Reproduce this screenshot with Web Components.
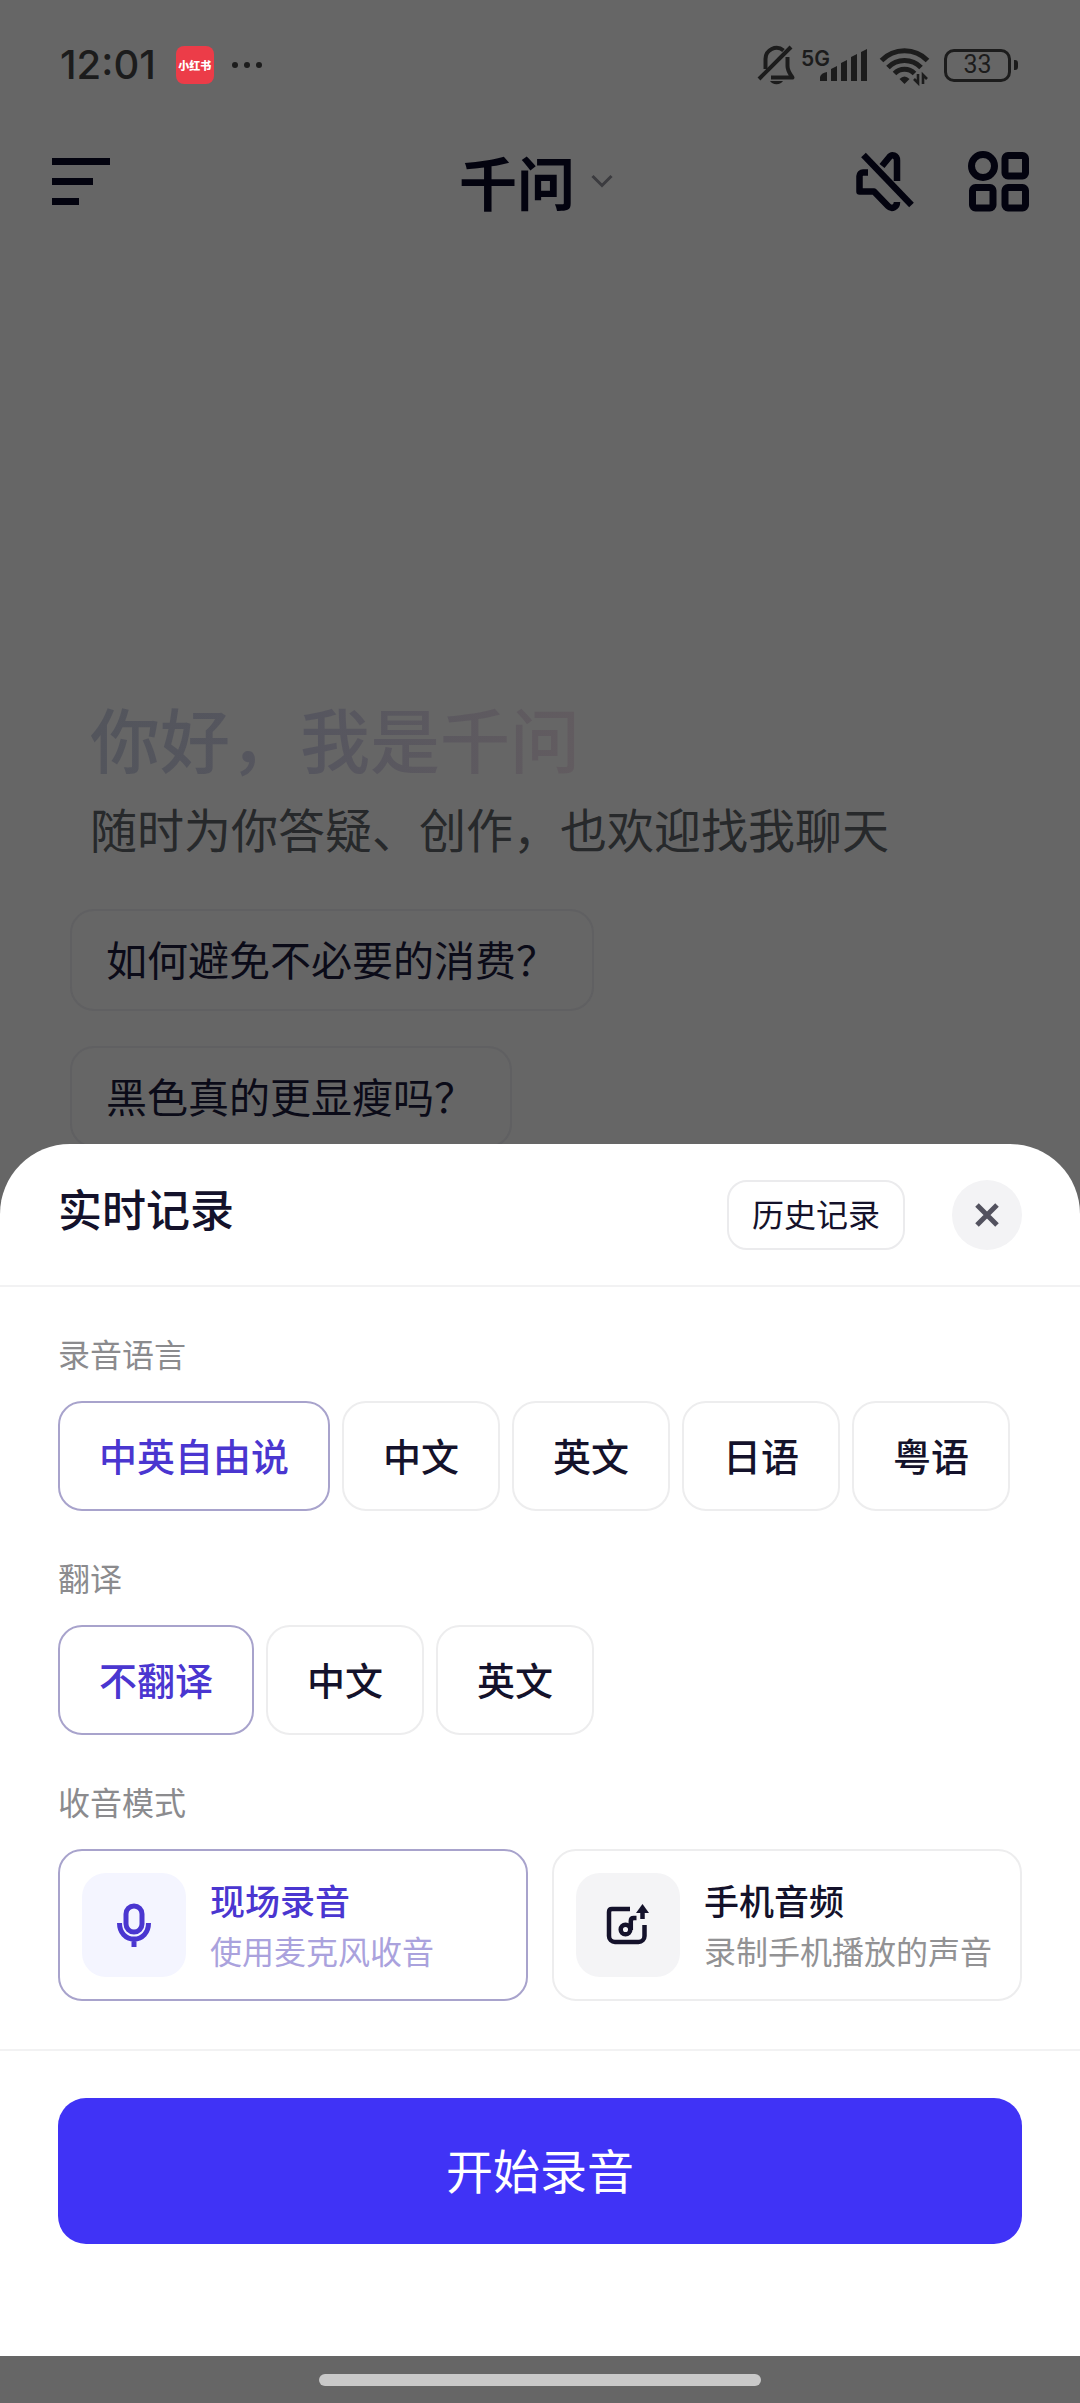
<!DOCTYPE html>
<html lang="zh-CN">
<head>
<meta charset="utf-8">
<meta name="viewport" content="width=device-width, initial-scale=1">
<title>千问</title>
<style>
  body {
    margin: 0;
    font-family: "Noto Sans CJK SC", sans-serif;
    color: #14122b;
    background: #666;
  }
</style>
</head>
<body>
<qw-app>
  <qw-home>
    <qw-suggestion>如何避免不必要的消费？</qw-suggestion>
    <qw-suggestion>黑色真的更显瘦吗？</qw-suggestion>
  </qw-home>
  <qw-sheet slot="sheet">
    <span slot="title">实时记录</span>
    <qw-chips label="录音语言" name="language" options="中英自由说,中文,英文,日语,粤语"></qw-chips>
    <qw-chips label="翻译" name="translate" options="不翻译,中文,英文"></qw-chips>
    <qw-modes label="收音模式"></qw-modes>
    <span slot="action">开始录音</span>
  </qw-sheet>
</qw-app>

<script>
const define = (name, markup, init) => {
  const template = document.createElement('template')
  template.innerHTML = `<style>* { box-sizing: border-box; }</style>${markup}`

  customElements.define(name, class extends HTMLElement {
    constructor() {
      super()
      this.attachShadow({ mode: 'open' })
      this.shadowRoot.appendChild(template.content.cloneNode(true))
    }

    connectedCallback() {
      init && init(this, this.shadowRoot)
    }
  })
}

define('qw-status', `
<style>
  :host {
    display: flex;
    align-items: center;
    justify-content: space-between;
    height: 130px;
    padding: 0 62px 0 60px;
    font-family: Inter, sans-serif;
    color: #1c1c1c;
  }
  div { display: flex; align-items: center; }
  svg { display: block; fill: none; stroke: currentColor; }
  time { font-size: 40px; font-weight: 500; line-height: 48px; }
  .app {
    justify-content: center;
    width: 38px;
    height: 38px;
    margin: 0 17px 0 20px;
    border-radius: 8px;
    background: #ec3c48;
    color: #fff;
    font: 900 11px/16px "Noto Sans CJK SC", sans-serif;
  }
  .network { align-items: flex-start; margin: 0 11px 0 4px; }
  .network span { font-size: 21px; font-weight: 600; line-height: 22px; }
  .network svg { margin-left: -10px; fill: currentColor; stroke: none; }
  .battery {
    justify-content: center;
    width: 67px;
    height: 33px;
    margin-left: 13px;
    border: 3px solid;
    border-radius: 10px;
    font-family: Roboto, sans-serif;
    font-size: 25px;
    line-height: 26px;
  }
  .nub { width: 4px; height: 10px; margin-left: 3px; border-radius: 0 3px 3px 0; background: currentColor; }
</style>
<div>
  <time>12:01</time>
  <div class="app">小红书</div>
  <svg width="32" height="8" viewBox="0 0 32 8" style="fill: currentColor; stroke: none">
    <circle cx="4" cy="4" r="3"/><circle cx="16" cy="4" r="3"/><circle cx="28" cy="4" r="3"/>
  </svg>
</div>
<div>
  <svg width="40" height="44" viewBox="2 1 40 44" stroke-width="4" stroke-linejoin="round">
    <path d="M10.5 27V17a11 11 0 0 1 18-8.500M32.500 15v9c0 5 2 7 5 11.500H16"/>
    <path d="M4 37L36 5"/>
    <path d="M15 39h13a7 5 0 0 1-13 0z" fill="currentColor" stroke="none"/>
  </svg>
  <div class="network">
    <span>5G</span>
    <svg width="48" height="34" viewBox="0 0 48 34">
      <path d="M0 33v-4q1-4 7-5v9zM11 33V21l6-3v15zM21 33V15l6-3v21zM31 33V9l6-3v27zM41 33V4l6-3v32z"/>
    </svg>
  </div>
  <svg width="52" height="42" viewBox="0 0 52 42" stroke-width="5">
    <path d="M2.500 16.500a32 32 0 0 1 46 0"/>
    <path d="M9 23.500a23 23 0 0 1 33 0"/>
    <path d="M15.500 29.500a14 14 0 0 1 20 0"/>
    <path d="M20.500 35q5-5 10 0l-5 5z" fill="currentColor" stroke="none"/>
    <path d="M39 30v9l-4-4M44 40v-9l4 4" stroke-width="2.600"/>
  </svg>
  <div class="battery">33</div>
  <span class="nub"></span>
</div>
`)

define('qw-header', `
<style>
  :host {
    display: grid;
    grid-template-columns: 1fr auto 1fr;
    align-items: center;
    height: 102px;
    padding: 0 50px;
    color: #03030f;
  }
  button {
    display: flex;
    align-items: center;
    padding: 0;
    border: 0;
    background: none;
    color: inherit;
    font: inherit;
    cursor: pointer;
  }
  svg { display: block; fill: none; stroke: currentColor; stroke-width: 6; }
  .title { gap: 16px; margin-right: 8px; font-size: 58px; font-weight: 700; line-height: 80px; }
  .title svg { stroke: #3b3b3f; stroke-width: 3; }
  .right { display: flex; justify-content: flex-end; gap: 48px; }
</style>
<button aria-label="菜单">
  <svg width="60" height="50" viewBox="0 0 60 50" style="stroke-width: 7"><path d="M2 5.500h58M2 25.500h41M2 45.500h27"/></svg>
</button>
<button class="title">千问
  <svg width="22" height="14" viewBox="0 0 22 14"><path d="M1.500 2l9.500 9.500L20.500 2"/></svg>
</button>
<div class="right">
  <button aria-label="静音">
    <svg width="64" height="66" viewBox="0 0 64 66" stroke-linejoin="round" style="stroke-width: 6.5">
      <path d="M28 18l7-8.500c3-4 8-2 8 3V33"/>
      <path d="M14 24.500H9a3.500 3.500 0 0 0-3.500 3.500v15.500H20l14 14.500c4 4 9 1 9-4"/>
      <path d="M9.500 7l48 50"/>
    </svg>
  </button>
  <button aria-label="更多">
    <svg width="64" height="66" viewBox="0 0 64 66" style="stroke-width: 7">
      <circle cx="17" cy="18" r="11.500"/>
      <rect x="39" y="7.500" width="20.500" height="20.500" rx="3"/>
      <rect x="6.500" y="39.500" width="20.500" height="20.500" rx="3"/>
      <rect x="39" y="39.500" width="20.500" height="20.500" rx="3"/>
    </svg>
  </button>
</div>
`)

define('qw-suggestion', `
<style>
  :host { display: block; }
  button {
    height: 102px;
    padding: 0 35px 5px 34px;
    border: 2px solid #606062;
    border-radius: 24px;
    background: none;
    color: #0b0b18;
    font: inherit;
    font-size: 41px;
    line-height: 60px;
    cursor: pointer;
  }
</style>
<button><slot></slot></button>
`)

define('qw-home', `
<style>
  :host { display: block; overflow: hidden; }
  main { padding: 464px 70px 0; }
  h1, p { margin: 0 20px; }
  h1 {
    width: fit-content;
    font-size: 70px;
    font-weight: 500;
    line-height: 84px;
    color: transparent;
    background: linear-gradient(90deg, #53555c, #56565f 45%, #625c60);
    background-clip: text;
  }
  p { margin-top: 18px; color: #27292b; font-size: 47px; line-height: 60px; }
  .list { display: flex; flex-direction: column; gap: 35px; margin-top: 51px; }
</style>
<qw-status></qw-status>
<qw-header></qw-header>
<main>
  <h1>你好，我是千问</h1>
  <p>随时为你答疑、创作，也欢迎找我聊天</p>
  <div class="list"><slot></slot></div>
</main>
`)

define('qw-chips', `
<style>
  :host { display: block; }
  fieldset { margin: 0; padding: 0; border: 0; }
  legend { padding: 0; color: #8b8b8e; font-size: 32px; line-height: 48px; }
  .row { display: flex; flex-wrap: wrap; gap: 12px; margin-top: 24px; }
  label {
    position: relative;
    padding: 24px 39px 26px;
    border: 2px solid #ededee;
    border-radius: 24px;
    font-size: 38px;
    line-height: 56px;
    font-weight: 500;
  }
  label:has(:checked) { border-color: #a8a3cc; color: #4a36d0; }
  input { position: absolute; inset: 0; margin: 0; opacity: 0; cursor: pointer; }
</style>
<fieldset>
  <legend></legend>
  <div class="row"></div>
</fieldset>
`, (host, root) => {
  const name = host.getAttribute('name')
  root.querySelector('legend').textContent = host.getAttribute('label')
  root.querySelector('.row').innerHTML = host.getAttribute('options').split(',')
    .map((text, i) => `<label><input type="radio" name="${name}" ${i ? '' : 'checked'}>${text}</label>`)
    .join('')
})

define('qw-modes', `
<style>
  :host { display: block; }
  fieldset { min-width: 0; margin: 0; padding: 0; border: 0; }
  legend { padding: 0; color: #8b8b8e; font-size: 32px; line-height: 48px; }
  .row { display: grid; grid-template-columns: 1fr 1fr; gap: 24px; margin-top: 24px; }
  label {
    position: relative;
    display: flex;
    align-items: center;
    gap: 24px;
    padding: 22px;
    border: 2px solid #ededee;
    border-radius: 24px;
  }
  .icon {
    display: grid;
    place-items: center;
    width: 104px;
    height: 104px;
    border-radius: 24px;
    background: #f4f4f6;
  }
  svg { fill: none; stroke: currentColor; }
  strong, small { display: block; white-space: nowrap; }
  strong { font-size: 35px; font-weight: 500; line-height: 50px; }
  small { color: #929294; font-size: 32px; line-height: 50px; }
  label:has(:checked) { border-color: #a8a3cc; color: #4a36d0; }
  label:has(:checked) .icon { background: #f4f5ff; }
  label:has(:checked) small { color: #aaa2dd; }
  input { position: absolute; inset: 0; margin: 0; opacity: 0; cursor: pointer; }
</style>
<fieldset>
  <legend></legend>
  <div class="row">
    <label>
      <input type="radio" name="mode" checked>
      <span class="icon">
        <svg width="34" height="44" viewBox="0 0 34 44" stroke-width="5">
          <rect x="9" y="3" width="16" height="26" rx="8"/>
          <path d="M2.500 20c0 9.500 6 16 14.500 16s14.500-6.500 14.500-16M17 36v8"/>
        </svg>
      </span>
      <span><strong>现场录音</strong><small>使用麦克风收音</small></span>
    </label>
    <label>
      <input type="radio" name="mode">
      <span class="icon">
        <svg width="44" height="42" viewBox="0 0 44 42" stroke-width="4.500">
          <path d="M24 5H6q-3 0-3 3v24a6 6 0 0 0 6 6h23.500a6 6 0 0 0 6-6V21"/>
          <circle cx="19.500" cy="25.500" r="4.800"/>
          <path d="M24.800 26v-9q0-3 3-3H30.500M36.500 15V7"/>
          <path d="M36.500 0L43 9H30z" fill="currentColor" stroke="none"/>
        </svg>
      </span>
      <span><strong>手机音频</strong><small>录制手机播放的声音</small></span>
    </label>
  </div>
</fieldset>
`, (host, root) => {
  root.querySelector('legend').textContent = host.getAttribute('label')
})

define('qw-sheet', `
<style>
  :host {
    display: block;
    border-radius: 70px 70px 0 0;
    background: #fff;
  }
  header, footer { padding: 0 58px; }
  header {
    display: flex;
    align-items: center;
    height: 143px;
    border-bottom: 2px solid #f2f2f3;
  }
  h2 { flex: 1; margin: 0 0 14px; font-size: 44px; font-weight: 500; line-height: 60px; }
  button { padding: 0; border: 0; font: inherit; color: inherit; cursor: pointer; }
  .history {
    height: 70px;
    padding: 0 23px 4px;
    border: 2px solid #ebebed;
    border-radius: 20px;
    background: none;
    font-size: 32px;
    line-height: 48px;
  }
  .close {
    display: grid;
    place-items: center;
    width: 70px;
    height: 70px;
    margin-left: 47px;
    border-radius: 50%;
    background: #f3f3f5;
    color: #53525f;
  }
  section {
    display: flex;
    flex-direction: column;
    gap: 42px;
    padding: 42px 58px 48px;
    border-bottom: 2px solid #f2f2f3;
  }
  footer { padding-top: 47px; padding-bottom: 112px; }
  .start {
    display: block;
    width: 100%;
    height: 146px;
    padding-bottom: 5px;
    border-radius: 28px;
    background: #4033f6;
    color: #fff;
    font-size: 47px;
    line-height: 60px;
  }
</style>
<header>
  <h2><slot name="title"></slot></h2>
  <button class="history">历史记录</button>
  <button class="close" aria-label="关闭">
    <svg width="24" height="24" viewBox="0 0 24 24" fill="none" stroke="currentColor" stroke-width="5"><path d="M2 2l20 20M22 2L2 22"/></svg>
  </button>
</header>
<section><slot></slot></section>
<footer><button class="start"><slot name="action"></slot></button></footer>
`)

define('qw-app', `
<style>
  :host {
    display: grid;
    grid-template-rows: minmax(0, 1fr) 47px;
    height: 100vh;
    min-height: 1800px;
  }
  /* the sheet lies over the lower part of the home screen */
  slot { display: contents; }
  ::slotted(*) { grid-area: 1 / 1; min-width: 0; }
  ::slotted([slot="sheet"]) { align-self: end; z-index: 1; }
  .nav { display: grid; place-items: center; grid-row: 2; }
  .nav span { width: 41%; height: 12px; border-radius: 6px; background: #c9c9c9; }
</style>
<slot></slot>
<slot name="sheet"></slot>
<div class="nav"><span></span></div>
`)
</script>
</body>
</html>
